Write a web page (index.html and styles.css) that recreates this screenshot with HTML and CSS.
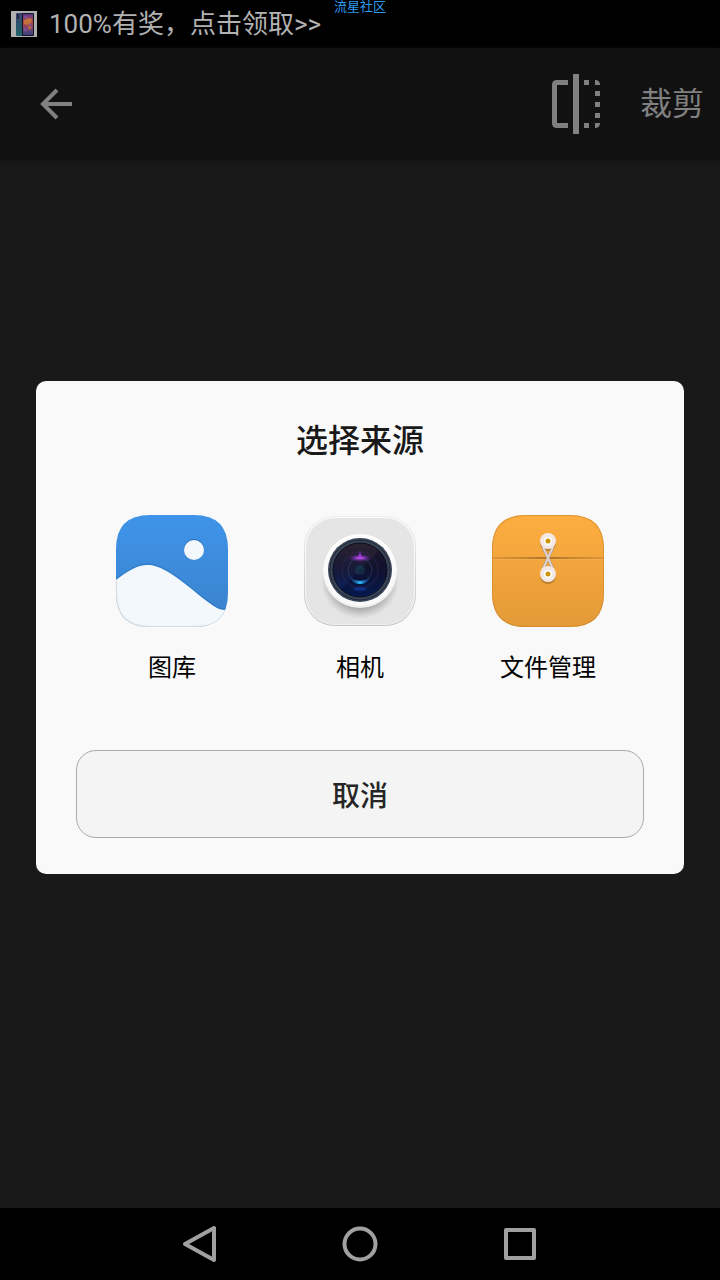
FILE: index.html
```html
<!DOCTYPE html>
<html lang="zh-CN">
  <head>
    <meta charset="utf-8">
    <meta name="viewport" content="width=device-width, initial-scale=1">
    <title>裁剪</title>
    <link rel="stylesheet" href="styles.css">
  </head>
  <body>
    <div class="status-bar">
      <svg class="thumb" width="26" height="26" viewBox="0 0 26 26" aria-hidden="true">
        <defs>
          <linearGradient id="phone" x1="0" y1="0" x2="0" y2="1">
            <stop offset="0" stop-color="#3c4270"/>
            <stop offset="1" stop-color="#1d6468"/>
          </linearGradient>
          <linearGradient id="wallpaper" x1="0" y1="0" x2="0" y2="1">
            <stop offset="0" stop-color="#5b3c8c"/>
            <stop offset="0.4" stop-color="#b8443f"/>
            <stop offset="0.7" stop-color="#7a4672"/>
            <stop offset="1" stop-color="#35407f"/>
          </linearGradient>
        </defs>
        <rect width="26" height="26" fill="#b0b0b0"/>
        <rect x="5" y="2" width="10" height="23" rx="1" fill="url(#phone)"/>
        <rect x="6" y="3" width="2" height="5" fill="#20243c"/>
        <rect x="11" y="2" width="12" height="23" rx="1" fill="#15151f"/>
        <rect x="12" y="3" width="10" height="21" fill="url(#wallpaper)"/>
        <path d="M13 9l5-2 3 1-1 4-3 2-4-1zM17 15l4 1-3 3z" fill="#c4703a"/>
        <path d="M13 5l4 1-3 2zM18 12l3 2-2 1zM13 17l3 2-2 2z" fill="#7959ae"/>
      </svg>
      <span class="ticker">100%有奖，点击领取&gt;&gt;</span>
      <span class="watermark">流星社区</span>
    </div>

    <main class="screen">
      <header class="app-bar">
        <button class="icon-btn" aria-label="返回">
          <svg width="32" height="32" viewBox="0 0 32 32">
            <path d="M32 16H4M17 2L3 16l14 14" fill="none" stroke="#808080" stroke-width="4"/>
          </svg>
        </button>
        <button class="icon-btn flip" aria-label="翻转">
          <svg width="48" height="60" viewBox="0 0 48 60" fill="#808080">
            <path d="M16 6H5Q0 6 0 11v38q0 5 5 5h11v-5H5V11h11z"/>
            <path d="M21 0h6v60h-6zM32 6h5v5h-5zM32 49h5v5h-5zM43 17h5v5h-5zM43 28h5v5h-5zM43 39h5v5h-5z"/>
            <path d="M43 6q5 0 5 5h-5zM43 54q5 0 5-5h-5z"/>
          </svg>
        </button>
        <button class="crop">裁剪</button>
      </header>

      <div class="overlay">
        <section class="dialog" role="dialog" aria-labelledby="dialog_title">
          <h1 class="title" id="dialog_title">选择来源</h1>
          <div class="sources">
            <button class="source">
              <svg width="112" height="112" viewBox="0 0 112 112" aria-hidden="true">
                <defs>
                  <linearGradient id="sky" x1="0" y1="0" x2="0" y2="1">
                    <stop offset="0" stop-color="#3f94e9"/>
                    <stop offset="1" stop-color="#3981cb"/>
                  </linearGradient>
                  <clipPath id="tile">
                    <path id="tile_shape" d="M34 0H78Q112 0 112 34V78Q112 112 78 112H34Q0 112 0 78V34Q0 0 34 0z"/>
                  </clipPath>
                </defs>
                <g clip-path="url(#tile)">
                  <rect width="112" height="112" fill="url(#sky)"/>
                  <path d="M0 65C12 56 21 50 32 50c21 0 50 32 69 43 4 2 7 2 11 2v17H0z" fill="#f3f8fc"/>
                  <path d="M0 64C12 55 21 49 32 49c21 0 50 32 69 43 4 2 7 2 11 2" fill="none" stroke="#2c70b8" stroke-opacity="0.6"/>
                  <path d="M0 66v12q0 34 34 34h44q30 0 34-18" fill="none" stroke="#d5d9dc" stroke-width="2"/>
                </g>
                <circle cx="78" cy="34" r="10" fill="#2c70b8"/>
                <circle cx="78" cy="35" r="10" fill="#f3f8fc"/>
              </svg>
              <span>图库</span>
            </button>
            <button class="source">
              <svg width="112" height="112" viewBox="0 0 112 112" aria-hidden="true">
                <defs>
                  <linearGradient id="edge" x1="0" y1="0" x2="0" y2="1">
                    <stop offset="0" stop-color="#ececec"/>
                    <stop offset="1" stop-color="#c4c4c4"/>
                  </linearGradient>
                  <linearGradient id="bevel" x1="0" y1="0" x2="0" y2="1">
                    <stop offset="0" stop-color="#ffffff"/>
                    <stop offset="1" stop-color="#f0f0f0"/>
                  </linearGradient>
                  <linearGradient id="glass" x1="0" y1="0" x2="0" y2="1">
                    <stop offset="0" stop-color="#2a222e"/>
                    <stop offset="0.5" stop-color="#171938"/>
                    <stop offset="1" stop-color="#052468"/>
                  </linearGradient>
                  <radialGradient id="purple_glow">
                    <stop offset="0" stop-color="#f0a0ff"/>
                    <stop offset="0.3" stop-color="#a03ad8" stop-opacity="0.9"/>
                    <stop offset="1" stop-color="#5a208c" stop-opacity="0"/>
                  </radialGradient>
                  <linearGradient id="blue_arc" x1="0" y1="0" x2="1" y2="0">
                    <stop offset="0" stop-color="#1050b0" stop-opacity="0.2"/>
                    <stop offset="0.5" stop-color="#30c0ff"/>
                    <stop offset="1" stop-color="#1050b0" stop-opacity="0.2"/>
                  </linearGradient>
                  <radialGradient id="lens_shadow">
                    <stop offset="0.6" stop-color="#777" stop-opacity="0.8"/>
                    <stop offset="1" stop-color="#999" stop-opacity="0"/>
                  </radialGradient>
                </defs>
                <rect x="0" y="1" width="112" height="110" rx="31" fill="url(#edge)"/>
                <rect x="1" y="2" width="110" height="108" rx="30" fill="url(#bevel)"/>
                <rect x="2" y="3" width="108" height="106" rx="29" fill="#e5e5e5"/>
                <ellipse cx="56" cy="67" rx="39" ry="37" fill="url(#lens_shadow)"/>
                <circle cx="56" cy="56" r="37" fill="url(#bevel)"/>
                <circle cx="56" cy="56" r="35" fill="#fafafa"/>
                <circle cx="56" cy="55" r="32" fill="#3a4457"/>
                <circle cx="56" cy="55" r="30" fill="none" stroke="#202838"/>
                <circle cx="56" cy="55" r="27" fill="url(#glass)" stroke="#090d18"/>
                <path d="M37 74L75 36q8 8 8 19c0 20-27 36-46 19z" fill="#05051e" fill-opacity="0.35"/>
                <circle cx="56" cy="55" r="18" fill="none" stroke="#3b3470" stroke-opacity="0.4"/>
                <circle cx="56" cy="55" r="12" fill="none" stroke="#35507f" stroke-opacity="0.5"/>
                <circle cx="56" cy="55" r="5" fill="#175063" fill-opacity="0.4"/>
                <ellipse cx="56" cy="43" rx="12" ry="4" fill="url(#purple_glow)"/>
                <ellipse cx="56" cy="41" rx="2" ry="6" fill="url(#purple_glow)"/>
                <path d="M46 63q10 6 20 0-3 6-10 6t-10-6z" fill="url(#blue_arc)"/>
                <ellipse cx="56" cy="74" rx="7" ry="2" fill="#1444b0" fill-opacity="0.5"/>
              </svg>
              <span>相机</span>
            </button>
            <button class="source">
              <svg width="112" height="112" viewBox="0 0 112 112" aria-hidden="true">
                <defs>
                  <linearGradient id="paper" x1="0" y1="0" x2="0" y2="1">
                    <stop offset="0" stop-color="#feae40"/>
                    <stop offset="1" stop-color="#e39a37"/>
                  </linearGradient>
                  <linearGradient id="fold" x1="0" y1="0" x2="1" y2="0">
                    <stop offset="0" stop-color="#b8792a" stop-opacity="0.6"/>
                    <stop offset="0.5" stop-color="#7c501c"/>
                    <stop offset="1" stop-color="#b8792a" stop-opacity="0.6"/>
                  </linearGradient>
                </defs>
                <g clip-path="url(#tile)">
                  <rect width="112" height="112" fill="url(#paper)"/>
                  <use href="#tile_shape" fill="none" stroke="#c98328" stroke-opacity="0.6" stroke-width="2"/>
                  <rect y="42" width="112" height="2" fill="url(#fold)" fill-opacity="0.6"/>
                  <rect y="44" width="112" height="1" fill="#ffc878" fill-opacity="0.2"/>
                </g>
                <circle cx="56" cy="28" r="8" fill="#8c5c20" fill-opacity="0.5"/>
                <circle cx="56" cy="61" r="8" fill="#8c5c20" fill-opacity="0.5"/>
                <path d="M51 32l10 22M61 32L51 54" stroke="#a38b7c" stroke-width="3"/>
                <path d="M51 32l10 22M61 32L51 54" stroke="#e0d3cc" stroke-width="2"/>
                <circle cx="56" cy="26" r="8" fill="#f3e8e6"/>
                <circle cx="56" cy="59" r="8" fill="#f3e8e6"/>
                <circle cx="56" cy="26" r="4" fill="#fff"/>
                <circle cx="56" cy="59" r="4" fill="#fff"/>
                <circle cx="56" cy="26" r="2.5" fill="#cf930b"/>
                <circle cx="56" cy="59" r="2.5" fill="#cf930b"/>
              </svg>
              <span>文件管理</span>
            </button>
          </div>
          <button class="cancel">取消</button>
        </section>
      </div>
    </main>

    <nav class="nav-bar">
      <button class="icon-btn" aria-label="后退">
        <svg width="40" height="40" viewBox="0 0 40 40">
          <path d="M34 4v32L5 20z"/>
        </svg>
      </button>
      <button class="icon-btn" aria-label="主页">
        <svg width="40" height="40" viewBox="0 0 40 40">
          <circle cx="20" cy="20" r="15.5"/>
        </svg>
      </button>
      <button class="icon-btn" aria-label="最近任务">
        <svg width="40" height="40" viewBox="0 0 40 40">
          <rect x="6" y="6" width="28" height="28"/>
        </svg>
      </button>
    </nav>
  </body>
</html>
```

FILE: styles.css
```css
* { box-sizing: border-box; }

body {
  margin: 0;
  min-height: 100vh;
  display: flex;
  flex-direction: column;
  background: #191919;
  font-family: Roboto, "Noto Sans CJK SC", sans-serif;
}

button {
  margin: 0;
  padding: 0;
  border: none;
  background: none;
  color: inherit;
  font: inherit;
  cursor: pointer;
}

svg { display: block; }

/* status bar */
.status-bar {
  position: relative;
  display: flex;
  align-items: center;
  gap: 12px;
  height: 48px;
  padding: 0 11px;
  background: #000;
  color: #b2b2b2;
}
.ticker { font-size: 26px; line-height: 48px; }
.watermark {
  position: absolute;
  top: 0;
  left: 50%;
  transform: translateX(-50%);
  color: #2f9bf0;
  font-size: 13px;
  line-height: 13px;
}

/* app bar */
.screen {
  position: relative;
  flex: 1;
}
.app-bar {
  display: flex;
  align-items: center;
  height: 112px;
  padding: 0 16px 0 40px;
  background: #111;
  box-shadow: 0 2px 6px #151515;
  color: #808080;
}
.flip {
  margin-left: auto;
  margin-right: 40px;
}
.crop { font-size: 32px; line-height: 48px; }

/* dialog */
.overlay {
  position: absolute;
  inset: 0;
  display: flex;
  align-items: center;
  justify-content: center;
  padding: 0 36px 2px;
}
.dialog {
  flex: 1;
  padding: 36px 40px;
  border-radius: 10px;
  background: #f9f9f9;
}
.title {
  margin: 0;
  color: #191919;
  font-size: 32px;
  font-weight: 500;
  line-height: 48px;
  text-align: center;
}
.sources {
  display: grid;
  grid-template-columns: repeat(3, 1fr);
  margin: 50px 2px 64px;
}
.source {
  display: flex;
  flex-direction: column;
  align-items: center;
  gap: 24px;
  color: #000;
  font-size: 24px;
  line-height: 35px;
}
.cancel {
  display: block;
  width: 100%;
  height: 88px;
  border: 1px solid #aaa;
  border-radius: 20px;
  background: #f4f4f4;
  color: #262626;
  font-size: 28px;
  font-weight: 500;
}

/* navigation bar */
.nav-bar {
  display: flex;
  align-items: center;
  justify-content: center;
  gap: 120px;
  height: 72px;
  background: #000;
}
.nav-bar svg {
  fill: none;
  stroke: #a0a0a0;
  stroke-width: 4;
  stroke-linejoin: round;
}
```
